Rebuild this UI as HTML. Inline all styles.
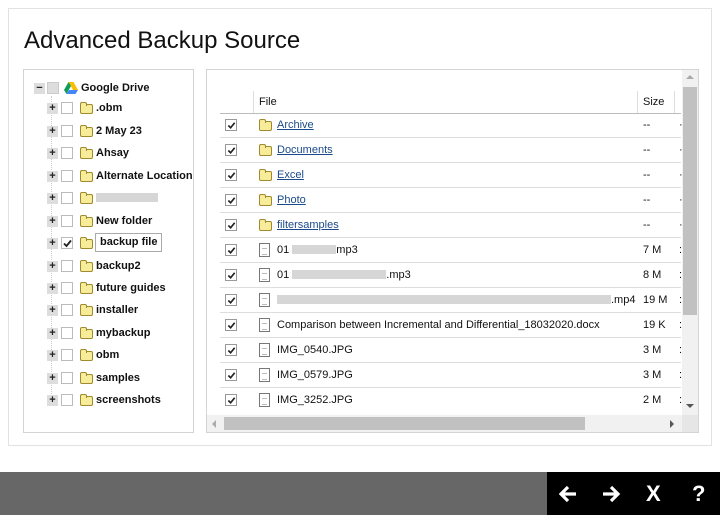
<!DOCTYPE html>
<html><head><meta charset="utf-8"><style>
*{margin:0;padding:0;box-sizing:border-box}
body{width:720px;height:515px;background:#fff;position:relative;overflow:hidden;font-family:"Liberation Sans",Arial,sans-serif;color:#111}
.a{position:absolute}
#panel{left:8px;top:8px;width:704px;height:438px;border:1px solid #e2e2e2}
h1{position:absolute;left:24px;top:27px;font-weight:normal;font-size:24px;color:#111}
#tree{left:23px;top:69px;width:171px;height:364px;border:1px solid #d4d4d4}
.tr{position:absolute;left:0;height:20px;font-size:11px;font-weight:bold;line-height:20px}
.pl{position:absolute;width:11px;height:11px;background:#ddd;font-size:11px;line-height:10px;text-align:center;font-weight:bold;color:#222}
.cb{position:absolute;width:12px;height:12px;border:1px solid #bbb;background:#fff}
.fd{position:absolute;width:13px;height:10px;border:1px solid #a08a2c;background:#f6ec9a;border-radius:2px}
.fd:before{content:"";position:absolute;left:-1px;top:-3px;width:5px;height:3px;border:1px solid #a08a2c;border-bottom:none;background:#f6ec9a;border-radius:2px 2px 0 0}
.tx{position:absolute}
#right{left:206px;top:69px;width:493px;height:364px;border:1px solid #d4d4d4}
.row{position:absolute;left:220px;width:461px;height:25px;border-bottom:1px solid #ddd;font-size:11px;line-height:25px}
.row .cb{left:5px;top:6px;border-color:#999}
.ck{position:absolute;left:1px;top:1px}
.row .fd{left:39px;top:8px}
.fi{position:absolute;left:39px;top:5px;width:11px;height:14px;border:1px solid #777;background:#fff}
.fi:after{content:"";position:absolute;left:2px;top:4px;width:5px;height:5px;border-top:1px solid #bbb;border-bottom:1px solid #bbb}
.nm{position:absolute;left:57px}
.lk{color:#1a4a8a;text-decoration:underline}
.sz{position:absolute;left:423px}
.dt{position:absolute;left:459px}
.blur{display:inline-block;height:9px;background:#ccc;vertical-align:-1px;opacity:.8}
</style></head><body>
<div id="panel" class="a"></div>
<h1>Advanced Backup Source</h1>

<div id="tree" class="a"></div>
<div class="a" style="left:51px;top:96px;width:0;height:310px;border-left:1px dotted #ccc"></div>
<div class="pl" style="left:34px;top:83px">−</div>
<div class="cb" style="left:47px;top:82px;background:#ddd;border-color:#ccc"></div>
<svg class="a" style="left:64px;top:82px" width="14" height="12" viewBox="0 0 14 12"><path d="M4.5 0h5l4.5 8h-5z" fill="#fbbc04"/><path d="M4.5 0L0 8l2.5 4 4.5-8z" fill="#0f9d58"/><path d="M2.5 12h9l2.5-4h-9z" fill="#4285f4"/></svg>
<div class="tx tr" style="left:81px;top:78px">Google Drive</div>

<div class="pl" style="left:47px;top:103px">+</div><div class="cb" style="left:61px;top:102px"></div><div class="fd" style="left:80px;top:104px"></div><div class="tr" style="left:96px;top:98px">.obm</div>
<div class="pl" style="left:47px;top:126px">+</div><div class="cb" style="left:61px;top:125px"></div><div class="fd" style="left:80px;top:127px"></div><div class="tr" style="left:96px;top:121px">2 May 23</div>
<div class="pl" style="left:47px;top:148px">+</div><div class="cb" style="left:61px;top:147px"></div><div class="fd" style="left:80px;top:149px"></div><div class="tr" style="left:96px;top:143px">Ahsay</div>
<div class="pl" style="left:47px;top:171px">+</div><div class="cb" style="left:61px;top:170px"></div><div class="fd" style="left:80px;top:172px"></div><div class="tr" style="left:96px;top:166px">Alternate Location</div>
<div class="pl" style="left:47px;top:193px">+</div><div class="cb" style="left:61px;top:192px"></div><div class="fd" style="left:80px;top:194px"></div><div class="tr" style="left:96px;top:188px"><span class="blur" style="width:62px"></span></div>
<div class="pl" style="left:47px;top:216px">+</div><div class="cb" style="left:61px;top:215px"></div><div class="fd" style="left:80px;top:217px"></div><div class="tr" style="left:96px;top:211px">New folder</div>
<div class="pl" style="left:47px;top:238px">+</div><div class="cb" style="left:61px;top:237px"><svg class="ck" width="9" height="9" viewBox="0 0 9 9"><path d="M1 4.5l2.5 2.5L8 1.5" stroke="#222" stroke-width="1.8" fill="none"/></svg></div><div class="fd" style="left:80px;top:239px"></div><div class="tr" style="left:95px;top:233px;border:1px solid #aaa;padding:0 4px;height:19px;line-height:17px">backup file</div>
<div class="pl" style="left:47px;top:261px">+</div><div class="cb" style="left:61px;top:260px"></div><div class="fd" style="left:80px;top:262px"></div><div class="tr" style="left:96px;top:256px">backup2</div>
<div class="pl" style="left:47px;top:283px">+</div><div class="cb" style="left:61px;top:282px"></div><div class="fd" style="left:80px;top:284px"></div><div class="tr" style="left:96px;top:278px">future guides</div>
<div class="pl" style="left:47px;top:305px">+</div><div class="cb" style="left:61px;top:304px"></div><div class="fd" style="left:80px;top:306px"></div><div class="tr" style="left:96px;top:300px">installer</div>
<div class="pl" style="left:47px;top:328px">+</div><div class="cb" style="left:61px;top:327px"></div><div class="fd" style="left:80px;top:329px"></div><div class="tr" style="left:96px;top:323px">mybackup</div>
<div class="pl" style="left:47px;top:350px">+</div><div class="cb" style="left:61px;top:349px"></div><div class="fd" style="left:80px;top:351px"></div><div class="tr" style="left:96px;top:345px">obm</div>
<div class="pl" style="left:47px;top:373px">+</div><div class="cb" style="left:61px;top:372px"></div><div class="fd" style="left:80px;top:374px"></div><div class="tr" style="left:96px;top:368px">samples</div>
<div class="pl" style="left:47px;top:395px">+</div><div class="cb" style="left:61px;top:394px"></div><div class="fd" style="left:80px;top:396px"></div><div class="tr" style="left:96px;top:390px">screenshots</div>

<div id="right" class="a"></div>
<div class="a" style="left:220px;top:91px;width:461px;height:23px;border-bottom:1px solid #bbb;font-size:11px;line-height:22px">
<div class="a" style="left:33px;top:0;height:22px;border-left:1px solid #ddd"></div>
<div class="a" style="left:39px">File</div>
<div class="a" style="left:417px;top:0;height:22px;border-left:1px solid #ddd"></div>
<div class="a" style="left:423px">Size</div>
<div class="a" style="left:454px;top:0;height:22px;border-left:1px solid #ddd"></div>
</div>

<svg width="0" height="0" style="position:absolute"><defs><symbol id="c" viewBox="0 0 10 10"><path d="M1.5 5l2.5 2.5L8.5 2" stroke="#222" stroke-width="1.8" fill="none"/></symbol></defs></svg>

<div class="row" style="top:113px"><div class="cb"><svg class="ck" width="9" height="9"><use href="#c"/></svg></div><div class="fd"></div><div class="nm lk">Archive</div><div class="sz">--</div><div class="dt">·</div></div>
<div class="row" style="top:138px"><div class="cb"><svg class="ck" width="9" height="9"><use href="#c"/></svg></div><div class="fd"></div><div class="nm lk">Documents</div><div class="sz">--</div><div class="dt">·</div></div>
<div class="row" style="top:163px"><div class="cb"><svg class="ck" width="9" height="9"><use href="#c"/></svg></div><div class="fd"></div><div class="nm lk">Excel</div><div class="sz">--</div><div class="dt">·</div></div>
<div class="row" style="top:188px"><div class="cb"><svg class="ck" width="9" height="9"><use href="#c"/></svg></div><div class="fd"></div><div class="nm lk">Photo</div><div class="sz">--</div><div class="dt">·</div></div>
<div class="row" style="top:213px"><div class="cb"><svg class="ck" width="9" height="9"><use href="#c"/></svg></div><div class="fd"></div><div class="nm lk">filtersamples</div><div class="sz">--</div><div class="dt">·</div></div>
<div class="row" style="top:238px"><div class="cb"><svg class="ck" width="9" height="9"><use href="#c"/></svg></div><div class="fi"></div><div class="nm">01 <span class="blur" style="width:44px"></span>mp3</div><div class="sz">7 M</div><div class="dt">:</div></div>
<div class="row" style="top:263px"><div class="cb"><svg class="ck" width="9" height="9"><use href="#c"/></svg></div><div class="fi"></div><div class="nm">01 <span class="blur" style="width:94px"></span>.mp3</div><div class="sz">8 M</div><div class="dt">:</div></div>
<div class="row" style="top:288px"><div class="cb"><svg class="ck" width="9" height="9"><use href="#c"/></svg></div><div class="fi"></div><div class="nm"><span class="blur" style="width:334px"></span>.mp4</div><div class="sz">19 M</div><div class="dt">:</div></div>
<div class="row" style="top:313px"><div class="cb"><svg class="ck" width="9" height="9"><use href="#c"/></svg></div><div class="fi"></div><div class="nm">Comparison between Incremental and Differential_18032020.docx</div><div class="sz">19 K</div><div class="dt">:</div></div>
<div class="row" style="top:338px"><div class="cb"><svg class="ck" width="9" height="9"><use href="#c"/></svg></div><div class="fi"></div><div class="nm">IMG_0540.JPG</div><div class="sz">3 M</div><div class="dt">:</div></div>
<div class="row" style="top:363px"><div class="cb"><svg class="ck" width="9" height="9"><use href="#c"/></svg></div><div class="fi"></div><div class="nm">IMG_0579.JPG</div><div class="sz">3 M</div><div class="dt">:</div></div>
<div class="row" style="top:388px;border-bottom:none"><div class="cb"><svg class="ck" width="9" height="9"><use href="#c"/></svg></div><div class="fi"></div><div class="nm">IMG_3252.JPG</div><div class="sz">2 M</div><div class="dt">:</div></div>

<div class="a" style="left:682px;top:70px;width:16px;height:345px;background:#f1f1f1"></div>
<div class="a" style="left:683px;top:87px;width:14px;height:228px;background:#c1c1c1"></div>
<div class="a" style="left:686px;top:75px;border:4px solid transparent;border-bottom-color:#aaa;border-top:none"></div>
<div class="a" style="left:686px;top:404px;border:4px solid transparent;border-top-color:#555;border-bottom:none"></div>
<div class="a" style="left:207px;top:415px;width:475px;height:17px;background:#f1f1f1"></div>
<div class="a" style="left:224px;top:417px;width:361px;height:13px;background:#c1c1c1"></div>
<div class="a" style="left:212px;top:420px;border:4px solid transparent;border-right-color:#aaa;border-left:none"></div>
<div class="a" style="left:670px;top:420px;border:4px solid transparent;border-left-color:#555;border-right:none"></div>
<div class="a" style="left:682px;top:415px;width:16px;height:17px;background:#e6e6e6"></div>

<div class="a" style="left:0;top:472px;width:547px;height:43px;background:#676767"></div>
<div class="a" style="left:547px;top:472px;width:173px;height:43px;background:#000;color:#fff;font-weight:bold;font-size:22px;line-height:43px">
<svg class="a" style="left:11px;top:13px" width="20" height="18" viewBox="0 0 20 18"><path d="M18 9H3M10 2L3 9l7 7" stroke="#fff" stroke-width="3.2" fill="none"/></svg>
<svg class="a" style="left:54px;top:13px" width="20" height="18" viewBox="0 0 20 18"><path d="M2 9h15M10 2l7 7-7 7" stroke="#fff" stroke-width="3.2" fill="none"/></svg>
<span class="a" style="left:99px;top:0">X</span>
<span class="a" style="left:145px;top:0">?</span>
</div>
</body></html>
